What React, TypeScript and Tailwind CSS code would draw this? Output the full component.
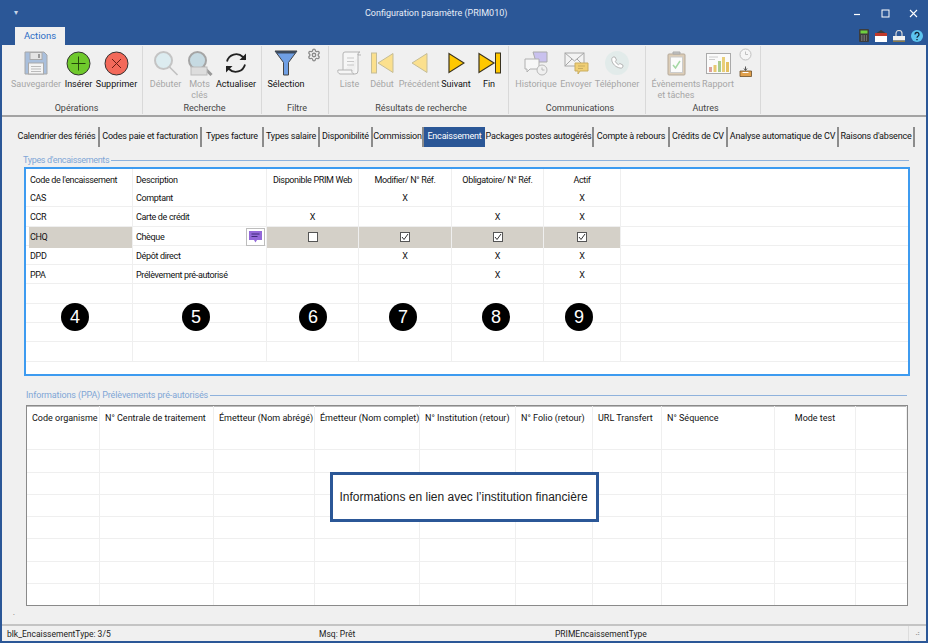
import { Settings } from "lucide-react";
import type { ReactNode } from "react";

const FONT = "font-['Roboto',sans-serif]";

function Save() {
  return (
    <svg width="24" height="24" viewBox="0 0 24 24">
      <path d="M1 1h19l3 3v19H1z" fill="#a9bfdc" stroke="#a8a8a8" />
      <rect x="6" y="1.5" width="12" height="7" fill="#e4e4e4" stroke="#aaa" />
      <rect x="14" y="3" width="2" height="4" fill="#999" />
      <rect x="4.5" y="12" width="15" height="11" fill="#f4f4f4" stroke="#aaa" />
      <path d="M7 15.5h10M7 18h10M7 20.5h10" stroke="#bbb" />
    </svg>
  );
}

function Circle({ bg, stroke, children }: { bg: string; stroke: string; children: ReactNode }) {
  return (
    <svg width="25" height="25" viewBox="0 0 25 25">
      <circle cx="12.5" cy="12.5" r="11.5" fill={bg} stroke="#333" strokeWidth="1" />
      <g stroke={stroke} strokeWidth="1" fill="none">{children}</g>
    </svg>
  );
}

function Magnifier({ abc }: { abc?: boolean }) {
  return (
    <svg width="26" height="25" viewBox="0 0 26 25">
      <circle cx="10.5" cy="9.5" r="8.5" fill={abc ? "#c6dae2" : "#dcecf0"} stroke={abc ? "#a5a5a5" : "#c4c4c4"} strokeWidth="2" />
      <path d="M16.5 16l8 8" stroke={abc ? "#999" : "#c0c0c0"} strokeWidth={abc ? 3 : 1.6} />
      {abc && <rect x="4" y="16" width="16" height="8" fill="#ddd" stroke="#bbb" />}
    </svg>
  );
}

function Refresh() {
  return (
    <svg width="24" height="24" viewBox="0 0 24 24" fill="none" stroke="#222" strokeWidth="1.8">
      <path d="M3 10.5a9.5 9.5 0 0 1 16-4.5l2.5 2.5" />
      <path d="M22 2.5v6.5h-6.5" fill="#222" stroke="none" />
      <path d="M21 13.5a9.5 9.5 0 0 1-16 4.5l-2.5-2.5" />
      <path d="M2 21.5v-6.5h6.5" fill="#222" stroke="none" />
    </svg>
  );
}

function Funnel() {
  return (
    <svg width="24" height="26" viewBox="0 0 24 26">
      <path d="M1 1h22L14.5 12.5V25h-5V12.5z" fill="#6f9fe4" stroke="#444" />
      <path d="M1 1h22l-2 2.5H3z" fill="#3c4a5c" />
    </svg>
  );
}

function Scroll() {
  return (
    <svg width="25" height="25" viewBox="0 0 25 25" fill="#f6f6f6" stroke="#b4b4b4">
      <path d="M6 20V3a2 2 0 0 1 2-2h15a2 2 0 0 0-2 2v1h3" />
      <path d="M21 3v17a3 3 0 0 1-3 3H3a3 3 0 0 1-2-4h14a3 3 0 0 0 2 4" />
      <path d="M10 7h7M10 10.5h7M10 14h7" stroke="#c8c8c8" />
    </svg>
  );
}

function Step({ dir, bar, dim }: { dir: "l" | "r"; bar?: boolean; dim?: boolean }) {
  const fill = dim ? "#fbe08e" : "#ffc800";
  const line = dim ? "#c5bd97" : "#3a3320";
  return (
    <svg width={bar ? 23 : 17} height="22" viewBox={bar ? "0 0 23 22" : "0 0 17 22"}>
      {dir === "l" && bar && <rect x="0.5" y="1" width="5" height="20" fill={fill} stroke={line} />}
      {dir === "l" && <path d={bar ? "M22 1.5v19L7 11z" : "M16 1.5v19L1 11z"} fill={fill} stroke={line} />}
      {dir === "r" && <path d="M1 1.5v19L16 11z" fill={fill} stroke={line} strokeWidth="1.2" />}
      {dir === "r" && bar && <rect x="17.5" y="1" width="5" height="20" fill={fill} stroke={line} />}
    </svg>
  );
}

function History() {
  return (
    <svg width="24" height="25" viewBox="0 0 24 25">
      <path d="M9 1h14v10H12z" fill="#c9c1ee" stroke="#aaa" />
      <path d="M1 8h14v10H6l-3 3v-3H1z" fill="#f7f7f7" stroke="#b0b0b0" />
      <circle cx="18" cy="19" r="5" fill="#f0f0f0" stroke="#b8b8b8" />
      <path d="M18 16.5V19h2.5" stroke="#b8b8b8" fill="none" />
    </svg>
  );
}

function Mail() {
  return (
    <svg width="25" height="25" viewBox="0 0 25 25">
      <rect x="1" y="2" width="19" height="13" fill="#f3f3f3" stroke="#a8a8a8" />
      <path d="M1 2l9.5 8L20 2M1 15l7-7M20 15l-7-7" stroke="#a8a8a8" fill="none" />
      <path d="M11 12h13v8h-8l-2 3v-3h-3z" fill="#f0cf74" stroke="#c9ad60" />
      <path d="M14 15h7M14 17.5h5" stroke="#c9ad60" />
    </svg>
  );
}

function Phone() {
  return (
    <svg width="24" height="24" viewBox="0 0 24 24">
      <circle cx="12" cy="12" r="12" fill="#e2ebea" />
      <path d="M8 6l2 0 1.5 3-1.2 1.4c.6 1.5 1.7 2.6 3.2 3.3l1.4-1.2 3 1.5v2c-.5 1-1.5 1.3-3 1C10.500 16 7.500 13 6.800 9.300 6.500 7.800 7 6.700 8 6z" fill="#fff" stroke="#b4b4b4" />
    </svg>
  );
}

function Clipboard() {
  return (
    <svg width="19" height="25" viewBox="0 0 19 25">
      <rect x="1" y="3" width="17" height="21" rx="1" fill="#dccdb7" stroke="#b5a99a" />
      <rect x="3.500" y="6" width="12" height="15.500" fill="#fbfbfb" stroke="#ccc" />
      <path d="M6 3h7V1H6z" fill="#c8c8c8" stroke="#aaa" />
      <path d="M6 14l2.500 3L13 10" stroke="#a4d8a4" strokeWidth="1.500" fill="none" />
    </svg>
  );
}

function Chart() {
  return (
    <svg width="25" height="21" viewBox="0 0 25 21">
      <rect x="0.500" y="0.500" width="24" height="20" fill="#fbfbfb" stroke="#aaa" />
      <path d="M3 4h9M3 6.500h6" stroke="#ccc" />
      <rect x="3" y="14" width="3" height="5" fill="#dca29a" />
      <rect x="7.500" y="12" width="3" height="7" fill="#e8c96f" />
      <rect x="12" y="8" width="3" height="11" fill="#a9cb8d" />
      <rect x="16" y="4" width="3" height="15" fill="#e9cf79" />
      <rect x="20" y="9" width="3" height="10" fill="#e3c164" />
    </svg>
  );
}

function SmallClock() {
  return (
    <svg width="13" height="13" viewBox="0 0 13 13" fill="none" stroke="#c0c0c0">
      <circle cx="6.500" cy="6.500" r="5.500" fill="#f6f6f6" />
      <path d="M6.500 3.500v3h2.500" />
    </svg>
  );
}

function SmallInbox() {
  return (
    <svg width="13" height="11" viewBox="0 0 13 11">
      <path d="M1 5h11.500v5.500H1z" fill="#e0a04c" stroke="#6b4f2c" strokeWidth="0.800" />
      <path d="M3.500 6.500h6" stroke="#fff" />
      <path d="M6.500 0.500v3.500M5 2.500l1.500 2 1.500-2" stroke="#555" fill="none" />
    </svg>
  );
}

function Check({ on }: { on?: boolean }) {
  return (
    <span className="flex h-[10px] w-[10px] items-center justify-center border border-[#555] bg-white">
      {on && (
        <svg width="8" height="8" viewBox="0 0 8 8">
          <path d="M1 4l2 2.500L7 1" stroke="#333" fill="none" />
        </svg>
      )}
    </span>
  );
}

type RibbonItem = { w: string; label?: string; dim?: boolean; icon: ReactNode };
type RibbonGroup = { w: string; pl: string; title: string; items: RibbonItem[] };

const groups: RibbonGroup[] = [
  {
    w: "w-[138px]", pl: "pl-[6px]", title: "Opérations",
    items: [
      { w: "w-[50px]", label: "Sauvegarder", dim: true, icon: <Save /> },
      { w: "w-[35px]", label: "Insérer", icon: <Circle bg="#6fc92c" stroke="#24480a"><path d="M12.500 5.500v14M5.500 12.500h14" /></Circle> },
      { w: "w-[41px]", label: "Supprimer", icon: <Circle bg="#f3695a" stroke="#6b1d14"><path d="M8 8l9 9M17 8l-9 9" /></Circle> },
    ],
  },
  {
    w: "w-[119px]", pl: "pl-[5px]", title: "Recherche",
    items: [
      { w: "w-[35px]", label: "Débuter", dim: true, icon: <Magnifier /> },
      { w: "w-[33px]", label: "Mots clés", dim: true, icon: <Magnifier abc /> },
      { w: "w-[40px]", label: "Actualiser", icon: <Refresh /> },
    ],
  },
  {
    w: "w-[67px]", pl: "pl-[4px]", title: "Filtre",
    items: [
      { w: "w-[40px]", label: "Sélection", icon: <Funnel /> },
      { w: "w-[16px]", icon: <Settings size={14} color="#8a8a8a" strokeWidth={2.2} /> },
    ],
  },
  {
    w: "w-[180px]", pl: "pl-[5px]", title: "Résultats de recherche",
    items: [
      { w: "w-[31px]", label: "Liste", dim: true, icon: <Scroll /> },
      { w: "w-[34px]", label: "Début", dim: true, icon: <Step dir="l" bar dim /> },
      { w: "w-[40px]", label: "Précédent", dim: true, icon: <Step dir="l" dim /> },
      { w: "w-[34px]", label: "Suivant", icon: <Step dir="r" /> },
      { w: "w-[32px]", label: "Fin", icon: <Step dir="r" bar /> },
    ],
  },
  {
    w: "w-[137px]", pl: "pl-[6px]", title: "Communications",
    items: [
      { w: "w-[42px]", label: "Historique", dim: true, icon: <History /> },
      { w: "w-[38px]", label: "Envoyer", dim: true, icon: <Mail /> },
      { w: "w-[44px]", label: "Téléphoner", dim: true, icon: <Phone /> },
    ],
  },
  {
    w: "w-[115px]", pl: "pl-[5px]", title: "Autres",
    items: [
      { w: "w-[50px]", label: "Évènements et tâches", dim: true, icon: <Clipboard /> },
      { w: "w-[34px]", label: "Rapport", dim: true, icon: <Chart /> },
      {
        w: "w-[20px]",
        icon: (
          <span className="flex flex-col items-center gap-[5px]">
            <SmallClock />
            <SmallInbox />
          </span>
        ),
      },
    ],
  },
];

const tabs = [
  { w: "w-[85px]", label: "Calendrier des fériés" },
  { w: "w-[102px]", label: "Codes paie et facturation" },
  { w: "w-[62px]", label: "Types facture" },
  { w: "w-[56px]", label: "Types salaire" },
  { w: "w-[53px]", label: "Disponibilité" },
  { w: "w-[51px]", label: "Commission" },
  { w: "w-[61px]", label: "Encaissement", active: true },
  { w: "w-[109px]", label: "Packages postes autogérés" },
  { w: "w-[76px]", label: "Compte à rebours" },
  { w: "w-[58px]", label: "Crédits de CV" },
  { w: "w-[111px]", label: "Analyse automatique de CV" },
  { w: "w-[76px]", label: "Raisons d'absence" },
];

const TOP_COLS = "grid grid-cols-[107px_134px_92px_93px_92px_77px_1fr]";
const BOTTOM_COLS = "grid grid-cols-[73px_114px_101px_105px_96px_77px_69px_113px_81px_1fr]";

const topRows = [
  ["CAS", "Comptant", "", "X", "", "X"],
  ["CCR", "Carte de crédit", "X", "", "X", "X"],
  ["CHQ", "Chèque", "box", "on", "on", "on"],
  ["DPD", "Dépôt direct", "", "X", "X", "X"],
  ["PPA", "Prélèvement pré-autorisé", "", "", "X", "X"],
  ["", "", "", "", "", ""],
  ["", "", "", "", "", ""],
  ["", "", "", "", "", ""],
  ["", "", "", "", "", ""],
];

const topHeads = ["Disponible PRIM Web", "Modifier/ N° Réf.", "Obligatoire/ N° Réf.", "Actif"];
const bottomHeads = [
  "Code organisme",
  "N° Centrale de traitement",
  "Émetteur (Nom abrégé)",
  "Émetteur (Nom complet)",
  "N° Institution (retour)",
  "N° Folio (retour)",
  "URL Transfert",
  "N° Séquence",
  "Mode test",
  "",
];

const CELL = "border-r border-[#efefef]";

function Legend({ title, cls }: { title: string; cls: string }) {
  return (
    <div className={`flex h-[12px] items-center gap-[2px] ${cls}`}>
      <span className="text-[9px] leading-[12px] text-[#7fa6d6]">{title}</span>
      <span className="h-px flex-1 bg-[#8fb2dc]" />
    </div>
  );
}

function TopGrid() {
  return (
    <div className="ml-[12px] mr-[2px] mt-[1px] h-[209px] border-2 border-[#3d9bf0] bg-white text-[9px] tracking-[-0.35px] text-[#111]">
      <div className={`${TOP_COLS} h-[19px] leading-[22px]`}>
        <span className={`${CELL} h-[19px] pl-[4px]`}>Code de l'encaissement</span>
        <span className={`${CELL} h-[19px] pl-[3px]`}>Description</span>
        {topHeads.map((h) => (
          <span key={h} className={`${CELL} h-[19px] text-center`}>{h}</span>
        ))}
      </div>
      {topRows.map((row, i) => {
        const selected = row[0] === "CHQ";
        return (
          <div key={i} className={`${TOP_COLS} h-[19.3px] border-b border-[#efefef] leading-[21px]`}>
            <span className={`${CELL} ${selected ? "ml-[3px] bg-[#d4d0c8] pl-[1px]" : "pl-[4px]"}`}>{row[0]}</span>
            <span className={`${CELL} flex items-center justify-between pl-[3px]`}>
              {row[1]}
              {selected && (
                <span className="mr-px flex h-[18px] w-[19px] items-center justify-center border border-[#bdbdbd] bg-white">
                  <svg width="13" height="12" viewBox="0 0 13 12">
                    <path d="M0 0h13v9H8l-1.500 2.500L5 9H0z" fill="#9368d8" />
                    <path d="M2.500 3h8M2.500 5.500h6" stroke="#3f2a78" />
                  </svg>
                </span>
              )}
            </span>
            {row.slice(2).map((c, j) => (
              <span
                key={j}
                className={`${CELL} flex items-center justify-center ${selected ? "bg-[#d4d0c8]" : ""}`}
              >
                {c === "box" && <Check />}
                {c === "on" && <Check on />}
                {c === "X" && "X"}
              </span>
            ))}
            <span />
          </div>
        );
      })}
    </div>
  );
}

function BottomGrid() {
  return (
    <div className="ml-[14px] mr-[4px] mt-[4px] h-[201px] overflow-hidden border border-[#8a8a8a] bg-white text-[9px] text-[#111] shadow-[inset_0_1px_0_#bbb]">
      <div className={`${BOTTOM_COLS} h-[22px] leading-[24px]`}>
        {bottomHeads.map((h, i) => (
          <span key={i} className={`${CELL} whitespace-nowrap ${h === "Mode test" ? "text-center" : "pl-[5px]"}`}>
            {h}
          </span>
        ))}
      </div>
      {[0, 1, 2, 3, 4, 5, 6, 7].map((r) => (
        <div key={r} className={`${BOTTOM_COLS} h-[22.3px] border-b border-[#efefef]`}>
          {bottomHeads.map((_, i) => (
            <span key={i} className={i < 9 ? CELL : ""} />
          ))}
        </div>
      ))}
    </div>
  );
}

const markers = [
  { n: 4, pos: "left-[61px]" },
  { n: 5, pos: "left-[182px]" },
  { n: 6, pos: "left-[299px]" },
  { n: 7, pos: "left-[389px]" },
  { n: 8, pos: "left-[482px]" },
  { n: 9, pos: "left-[565px]" },
];

export default function App() {
  return (
    <div className={`relative flex h-[643px] w-[928px] flex-col overflow-hidden bg-[#2b5797] ${FONT}`}>
      {/* title bar */}
      <div className="flex h-[26px] items-center text-white">
        <span className="ml-[14px] w-[351px] text-[8px] leading-none text-[#c7d3e6]">▾</span>
        <span className="w-[478px] pt-[2px] text-[9px] text-[#e8eef7]">Configuration paramètre (PRIM010)</span>
        <span className="flex w-[28px] justify-center">
          <svg width="8" height="8" viewBox="0 0 8 8"><path d="M1 5.500h6" stroke="#fff" strokeWidth="1.200" /></svg>
        </span>
        <span className="flex w-[28px] justify-center">
          <svg width="9" height="9" viewBox="0 0 9 9"><rect x="1" y="1" width="7" height="7" fill="none" stroke="#fff" /></svg>
        </span>
        <span className="flex w-[28px] justify-center">
          <svg width="9" height="9" viewBox="0 0 9 9"><path d="M1 1l7 7M8 1l-7 7" stroke="#fff" strokeWidth="1.100" /></svg>
        </span>
      </div>
      <div className="flex h-[19px] items-end pl-[15px]">
        <span className="flex h-[18px] w-[50px] items-center justify-center bg-[#f0f0f0] text-[9.5px] text-[#2b6cc4]">Actions</span>
        <span className="ml-auto mr-[5px] flex h-[19px] items-center gap-[6px]">
          <svg width="10" height="13" viewBox="0 0 10 13">
            <rect width="10" height="13" rx="1" fill="#3c3c3c" />
            <rect x="1.500" y="1.500" width="7" height="3" fill="#6fcf3f" />
            <path d="M2 7h6M2 9h6M2 11h6" stroke="#999" strokeDasharray="1.500 1" />
          </svg>
          <svg width="12" height="12" viewBox="0 0 12 12">
            <path d="M6 0l6 4H0z" fill="#3c3c3c" />
            <rect y="3" width="12" height="3" fill="#c0392b" />
            <rect y="6" width="12" height="6" fill="#fff" />
          </svg>
          <svg width="12" height="12" viewBox="0 0 12 12">
            <path d="M3 6V3.500a3 3 0 0 1 6 0V6" fill="none" stroke="#d8d8d8" strokeWidth="1.200" />
            <rect y="6" width="12" height="4.500" fill="#f2f2f2" />
            <rect y="10.500" width="12" height="1.500" fill="#8a7a4a" />
          </svg>
          <svg width="12" height="12" viewBox="0 0 12 12">
            <circle cx="6" cy="6" r="6" fill="#5cc4ef" />
            <path d="M4 4.500a2 2 0 1 1 3 1.700c-.7.400-1 .8-1 1.500M6 9v1.200" stroke="#123" strokeWidth="1.300" fill="none" />
          </svg>
        </span>
      </div>

      {/* ribbon + content */}
      <div className="ml-[2px] mr-[2px] flex flex-1 flex-col bg-[#f0f0f0]">
        <div className="flex h-[72px] border-b-2 border-[#a3a3a3] pl-[3px]">
          {groups.map((g) => (
            <div key={g.title} className={`my-px flex flex-col border-r border-[#d9d9d9] ${g.w} ${g.pl}`}>
              <div className="flex h-[55px] shrink-0 items-start">
                {g.items.map((it, i) => (
                  <div
                    key={i}
                    className={`flex flex-col items-center text-center text-[9px] leading-[11px] ${it.w} ${it.dim ? "text-[#a6a6a6]" : "text-[#111]"}`}
                  >
                    <span className={`flex h-[26px] justify-center ${it.label ? "mt-[4px] items-center" : "mt-[2px] items-start"}`}>{it.icon}</span>
                    {it.label && <span className="mt-[3px]">{it.label}</span>}
                  </div>
                ))}
              </div>
              <span className="shrink-0 text-center text-[9px] leading-[14px] text-[#444]">{g.title}</span>
            </div>
          ))}
        </div>

        <div className="flex h-[30px] items-end pl-[13px]">
          {tabs.map((t) => (
            <span
              key={t.label}
              className={`flex h-[20px] shrink-0 items-center justify-center whitespace-nowrap text-[9px] tracking-[-0.2px] ${t.w} ${t.active ? "bg-[#2b5797] text-white" : "border-r-2 border-[#8c8c8c] text-[#111]"}`}
            >
              {t.label}
            </span>
          ))}
        </div>

        <div className="mt-[7px] flex flex-1 flex-col pl-[10px] pr-[14px]">
          <Legend title="Types d'encaissements" cls="pl-[11px] pr-[3px] tracking-[-0.33px]" />
          <TopGrid />
          <div className="mt-[13px]">
            <Legend title="Informations (PPA) Prélèvements pré-autorisés" cls="pl-[14px] pr-[5px] tracking-[-0.13px]" />
          </div>
          <BottomGrid />
          <span className="ml-[1px] text-[7px] leading-[14px] text-[#555]">.</span>
        </div>

        <div className="flex h-[17px] border-t-2 border-[#c4c4c4] text-[8.5px] leading-[16px] text-[#222]">
          <span className="w-[317px] pl-[5px]">blk_EncaissementType: 3/5</span>
          <span className="w-[236px]">Msq: Prêt</span>
          <span className="w-[353px]">PRIMEncaissementType</span>
          <span className="border-l border-[#ddd] pl-[6px] text-[7px] text-[#999]">⠴</span>
        </div>
      </div>
      <div className="h-[2px]" />

      {/* annotations over the grids */}
      {markers.map((m) => (
        <span
          key={m.n}
          className={`absolute top-[303px] flex h-[28px] w-[28px] items-center justify-center rounded-full bg-black font-['Liberation_Sans',sans-serif] text-[18px] text-white ${m.pos}`}
        >
          {m.n}
        </span>
      ))}
      <div className="absolute left-[330px] top-[472px] flex h-[50px] w-[269px] items-center justify-center border-[3px] border-[#2b5797] bg-white pr-[2px] font-['Liberation_Sans',sans-serif] text-[12px] text-[#222]">
        Informations en lien avec l’institution financière
      </div>
    </div>
  );
}
